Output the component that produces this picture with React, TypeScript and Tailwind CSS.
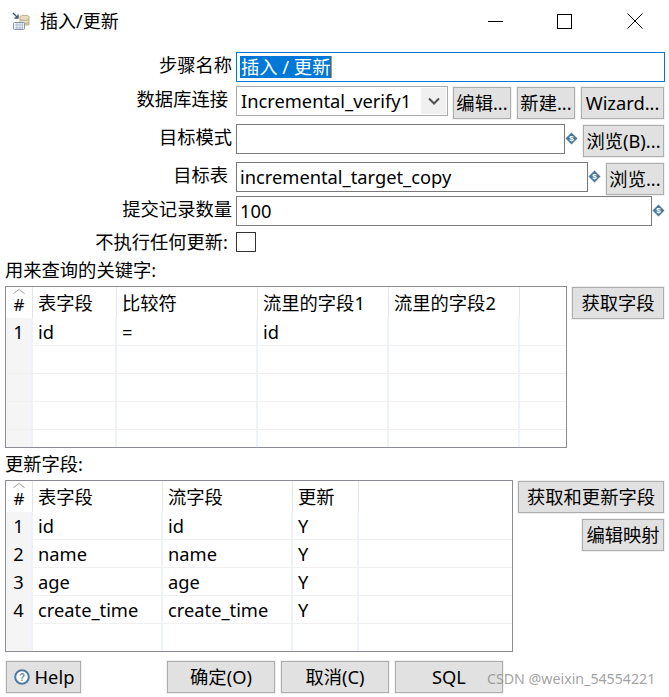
import type { ReactNode } from "react";

const FONT = "font-['Noto_Sans','Noto_Sans_CJK_SC',sans-serif]";
const KEY_COLS = "grid-cols-[27px_84px_141px_131px_131px_1fr]";
const UPDATE_COLS = "grid-cols-[27px_130px_130px_66px_1fr]";

function Btn({ className, children }: { className: string; children: ReactNode }) {
  return (
    <div className={`flex h-[32px] shrink-0 items-center justify-center whitespace-nowrap border border-[#adadad] bg-[#e1e1e1] shadow-[0_0_0_1px_#f0f0f0] ${className}`}>
      {children}
    </div>
  );
}

function Label({ className, children }: { className: string; children: ReactNode }) {
  return <div className={`mt-px h-6 w-[236px] shrink-0 whitespace-nowrap text-right leading-6 ${className}`}>{children}</div>;
}

function VarIcon() {
  return (
    <svg viewBox="0 0 13 13" className="h-[13px] w-[13px] shrink-0">
      <path d="M6.5 0.5 12.5 6.5 6.5 12.5 0.5 6.5Z" fill="#4a7a9c" />
      <text x="6.5" y="9.2" textAnchor="middle" fontSize="8" fontWeight="700" fill="#fff" fontFamily="Liberation Sans, sans-serif">$</text>
    </svg>
  );
}

function TitleIcon() {
  return (
    <svg viewBox="0 0 18 19" className="ml-3 h-[19px] w-[18px] shrink-0">
      <path d="M1 1 6 6M6 2.5V6H2.5" fill="none" stroke="#44586c" strokeWidth="1.4" />
      <path d="M8 4.5C8 3 17 3 17 4.5V13H8Z" fill="#e9dcb8" stroke="#a79f87" strokeWidth="0.8" />
      <path d="M8 7.5C10 8.7 15 8.7 17 7.5M8 10.5C10 11.7 15 11.7 17 10.5" fill="none" stroke="#a79f87" strokeWidth="0.8" />
      <rect x="1.5" y="10.5" width="11" height="7" rx="1" fill="#eef2f6" stroke="#7f98b0" />
      <path d="M3 15.8H11M3 13H11M5 11V17M8 11V17M10.5 11V17" stroke="#9db0c4" strokeWidth="0.7" />
    </svg>
  );
}

function HelpIcon() {
  return (
    <svg viewBox="0 0 16 16" className="h-4 w-4 shrink-0">
      <circle cx="8" cy="8" r="6.8" fill="#fff" stroke="#4d7a9e" strokeWidth="2" />
      <text x="8" y="11.6" textAnchor="middle" fontSize="10" fontWeight="700" fill="#6f8ea8" fontFamily="Liberation Sans, sans-serif">?</text>
    </svg>
  );
}

function HeaderRow({ cols, labels }: { cols: string; labels: string[] }) {
  return (
    <div className={`grid h-[31px] shrink-0 ${cols}`}>
      <div className="relative flex items-center justify-center border-r border-[#e6e6e6] pt-[4px] text-[17px] leading-none">
        <svg viewBox="0 0 12 5" className="absolute left-[7px] top-[2px] h-[5px] w-[12px]">
          <path d="M0.5 4.5 6 0.5 11.5 4.5" fill="none" stroke="#9a9a9a" />
        </svg>
        #
      </div>
      {labels.map((label, i) => (
        <div key={i} className="flex items-center whitespace-nowrap border-r border-[#e6e6e6] pl-[5px] pt-px last:border-r-0">
          {label}
        </div>
      ))}
    </div>
  );
}

function BodyRow({ cols, num, cells }: { cols: string; num?: number; cells: string[] }) {
  return (
    <div className={`grid h-[28px] shrink-0 border-b border-[#f0f0f0] ${cols}`}>
      <div className="flex items-center justify-center border-r-2 border-[#eef2fa] bg-[#f5f5f6] pb-px">{num}</div>
      {cells.map((cell, i) => (
        <div key={i} className="flex items-center whitespace-nowrap border-r-2 border-[#eef2fa] pb-px pl-[5px] last:border-r-0">
          {cell}
        </div>
      ))}
    </div>
  );
}

const updateRows = [
  ["id", "id", "Y", ""],
  ["name", "name", "Y", ""],
  ["age", "age", "Y", ""],
  ["create_time", "create_time", "Y", ""],
  ["", "", "", ""],
];

export default function App() {
  return (
    <div className={`relative flex h-[697px] w-[669px] flex-col overflow-hidden bg-white text-[18.3px] text-black ${FONT}`}>
      {/* title bar */}
      <div className="flex h-[52px] shrink-0 items-center pb-[10px]">
        <TitleIcon />
        <span className="ml-[10px] text-[18px]">插入/更新</span>
        <div className="ml-auto h-px w-[15px] bg-black" />
        <div className="ml-[54px] h-[15px] w-[15px] border border-black" />
        <svg viewBox="0 0 16 16" className="ml-[55px] mr-[26px] h-4 w-4">
          <path d="M0.5 0.5 15.5 15.5M15.5 0.5 0.5 15.5" stroke="#000" fill="none" />
        </svg>
      </div>

      {/* step settings */}
      <div className="flex h-[34px] shrink-0 items-start">
        <Label className="pr-1">步骤名称</Label>
        <div className="flex h-[30px] w-[429px] items-center border border-[#0078d7] pl-[3px]">
          <span className="flex h-[22px] items-center border-r border-[#e08a3c] bg-[#0078d7] px-px text-white">插入 / 更新</span>
        </div>
      </div>
      <div className="flex h-[38px] shrink-0 items-start">
        <Label className="pr-2">数据库连接</Label>
        <div className="flex h-[30px] w-[212px] shrink-0 items-center justify-between border border-[#ababab] pl-1 pr-px">
          <span>Incremental_verify1</span>
          <div className="flex h-[26px] w-[25px] items-center justify-center bg-[#f0f0f0]">
            <svg viewBox="0 0 12 8" className="h-2 w-3">
              <path d="M1 1.5 6 6.5 11 1.5" fill="none" stroke="#505050" strokeWidth="2" />
            </svg>
          </div>
        </div>
        <Btn className="ml-[5px] mt-px w-[58px]">编辑...</Btn>
        <Btn className="ml-[6px] mt-px w-[58px]">新建...</Btn>
        <Btn className="ml-[6px] mt-px w-[83px]">Wizard...</Btn>
      </div>
      <div className="flex h-[38px] shrink-0 items-start">
        <Label className="pr-1">目标模式</Label>
        <div className="h-[30px] w-[329px] shrink-0 border border-[#7a7a7a]" />
        <div className="mt-[8px]"><VarIcon /></div>
        <Btn className="ml-[5px] mt-px w-[81px]">浏览(B)...</Btn>
      </div>
      <div className="flex h-[34px] shrink-0 items-start">
        <Label className="pr-2">目标表</Label>
        <div className="flex h-[30px] w-[352px] shrink-0 items-center border border-[#7a7a7a] pl-[3px]">incremental_target_copy</div>
        <div className="mt-[8px]"><VarIcon /></div>
        <Btn className="ml-[5px] mt-px w-[58px]">浏览...</Btn>
      </div>
      <div className="flex h-[36px] shrink-0 items-start">
        <Label className="pr-1">提交记录数量</Label>
        <div className="flex h-[30px] w-[416px] shrink-0 items-center border border-[#7a7a7a] pl-[3px]">100</div>
        <div className="mt-[8px]"><VarIcon /></div>
      </div>
      <div className="flex h-[20px] shrink-0 items-center">
        <div className="h-6 w-[236px] shrink-0 whitespace-nowrap pr-2 text-right leading-6">不执行任何更新:</div>
        <div className="h-[20px] w-[20px] border border-[#333]" />
      </div>

      {/* key table */}
      <div className="ml-[5px] mt-[6px] h-6 shrink-0 leading-6">用来查询的关键字:</div>
      <div className="ml-[5px] mt-[4px] flex shrink-0 items-start">
        <div className="flex h-[162px] w-[562px] shrink-0 flex-col overflow-hidden border border-[#8c8c94]">
          <HeaderRow cols={KEY_COLS} labels={["表字段", "比较符", "流里的字段1", "流里的字段2", ""]} />
          <BodyRow cols={KEY_COLS} num={1} cells={["id", "=", "id", "", ""]} />
          {[0, 1, 2, 3].map((i) => (
            <BodyRow key={i} cols={KEY_COLS} cells={["", "", "", "", ""]} />
          ))}
        </div>
        <Btn className="ml-[5px] mt-px w-[92px]">获取字段</Btn>
      </div>

      {/* update table */}
      <div className="ml-[5px] mt-[4px] h-6 shrink-0 leading-6">更新字段:</div>
      <div className="ml-[5px] mt-[4px] flex shrink-0 items-start">
        <div className="flex h-[172px] w-[508px] shrink-0 flex-col overflow-hidden border border-[#8c8c94]">
          <HeaderRow cols={UPDATE_COLS} labels={["表字段", "流字段", "更新", ""]} />
          {updateRows.map((row, i) => (
            <BodyRow key={i} cols={UPDATE_COLS} num={i < 4 ? i + 1 : undefined} cells={row} />
          ))}
        </div>
        <div className="ml-[5px] flex w-[146px] shrink-0 flex-col items-end gap-[6px] pt-px">
          <Btn className="w-[146px]">获取和更新字段</Btn>
          <Btn className="w-[82px]">编辑映射</Btn>
        </div>
      </div>

      {/* bottom buttons */}
      <div className="ml-[6px] mt-[9px] flex shrink-0 items-start">
        <Btn className="w-[75px] gap-[5px] pl-px">
          <HelpIcon />
          Help
        </Btn>
        <Btn className="ml-[86px] w-[108px]">确定(O)</Btn>
        <Btn className="ml-[6px] w-[108px]">取消(C)</Btn>
        <Btn className="ml-[6px] w-[108px]">SQL</Btn>
      </div>

      {/* watermark */}
      <div className="absolute left-[487px] top-[669px] whitespace-nowrap text-[14.2px] leading-5 text-[#8a8a8a]/80">CSDN @weixin_54554221</div>
    </div>
  );
}
